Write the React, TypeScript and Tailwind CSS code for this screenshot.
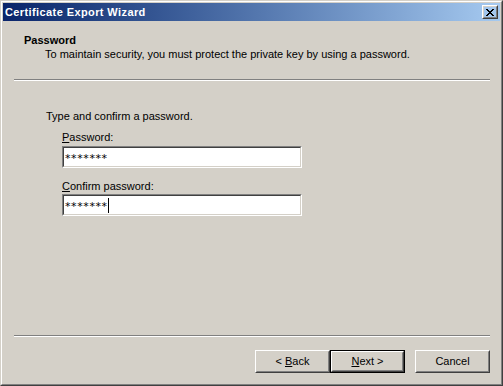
import React from "react";

const raised =
  "border border-t-white border-l-white border-r-[#404040] border-b-[#404040]";
const raisedInner =
  "border border-t-[#d4d0c8] border-l-[#d4d0c8] border-r-[#808080] border-b-[#808080]";

function Button({ children, isDefault }: { children: React.ReactNode; isDefault?: boolean }) {
  const body = (
    <div className={`h-full w-full ${raised}`}>
      <div className={`flex h-full w-full items-center justify-center ${raisedInner}`}>
        {children}
      </div>
    </div>
  );
  return (
    <div className={`h-[23px] w-[75px] ${isDefault ? "border border-black" : ""}`}>{body}</div>
  );
}

function TextBox({ value, caret }: { value: string; caret?: boolean }) {
  return (
    <div className="h-[22px] w-[240px] border border-t-[#808080] border-l-[#808080] border-r-white border-b-white">
      <div className="flex h-full w-full items-center border border-t-[#404040] border-l-[#404040] border-r-[#d4d0c8] border-b-[#d4d0c8] bg-white pl-px">
        <span
          className="pt-[2px] leading-[13px] tracking-[0.6px]"
          style={{ fontFamily: '"DejaVu Sans", sans-serif' }}
        >
          {value}
        </span>
        {caret && <span className="h-[15px] w-px bg-black" />}
      </div>
    </div>
  );
}

function Separator() {
  return (
    <div className="ml-[11px] mr-[10px]">
      <div className="h-px bg-[#808080]" />
      <div className="h-px bg-white" />
    </div>
  );
}

export default function App() {
  return (
    <div
      className="h-[386px] w-[503px] border border-t-[#d4d0c8] border-l-[#d4d0c8] border-r-[#404040] border-b-[#404040] text-[11px] leading-[13px] text-black"
      style={{ fontFamily: '"Liberation Sans", Arial, sans-serif' }}
    >
      <div className="flex h-full flex-col border border-t-white border-l-white border-r-[#808080] border-b-[#808080] bg-[#d4d0c8] p-px">
        {/* Title bar */}
        <div className="flex h-[18px] items-center bg-linear-to-r from-[#0a246a] to-[#a6caf0] pl-[2px] pr-[2px]">
          <span className="font-bold tracking-[0.4px] text-white">Certificate Export Wizard</span>
          <div className={`ml-auto h-[14px] w-[16px] ${raised}`}>
            <div className={`flex h-full w-full items-center justify-center ${raisedInner}`}>
              <svg width="8" height="7" viewBox="0 0 8 7" shapeRendering="crispEdges">
                <path
                  d="M0 0h2v1H0zM6 0h2v1H6zM1 1h2v1H1zM5 1h2v1H5zM2 2h4v1H2zM3 3h2v1H3zM2 4h4v1H2zM1 5h2v1H1zM5 5h2v1H5zM0 6h2v1H0zM6 6h2v1H6z"
                  fill="#000"
                />
              </svg>
            </div>
          </div>
        </div>

        {/* Header */}
        <div className="pl-[21px] pt-[13px]">
          <div className="font-bold">Password</div>
          <div className="mt-px pl-[21px]">
            To maintain security, you must protect the private key by using a password.
          </div>
        </div>
        <div className="mt-[18px]">
          <Separator />
        </div>

        {/* Body */}
        <div className="flex-1 pl-[43px] pt-[29px]">
          <div>Type and confirm a password.</div>
          <div className="pl-[16px] pt-[8px]">
            <div>
              <span className="underline">P</span>assword:
            </div>
            <div className="mt-[2px]">
              <TextBox value="*******" />
            </div>
            <div className="mt-[12px]">
              <span className="underline">C</span>onfirm password:
            </div>
            <div className="mt-px">
              <TextBox value="*******" caret />
            </div>
          </div>
        </div>

        <Separator />

        {/* Buttons */}
        <div className="flex justify-end pb-[10px] pr-[10px] pt-[13px]">
          <Button>
            &lt; <span className="ml-[3px] underline">B</span>ack
          </Button>
          <Button isDefault>
            <span className="underline">N</span>ext &gt;
          </Button>
          <div className="ml-[10px]">
            <Button>Cancel</Button>
          </div>
        </div>
      </div>
    </div>
  );
}
